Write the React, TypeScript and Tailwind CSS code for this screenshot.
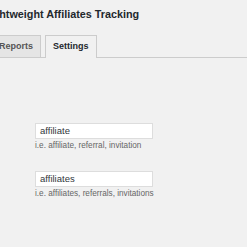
export default function App() {
  return (
    <div className="w-[247px] h-[247px] overflow-hidden bg-[#f1f1f1] font-['Liberation_Sans',Arial,sans-serif]">
      <div className="ml-[-17px] w-[281px]">
        <h1 className="pt-[7px] h-[36px] text-[10.8px] leading-[14px] font-bold text-[#23282d] whitespace-nowrap">
          Lightweight Affiliates Tracking
        </h1>

        <nav className="flex items-end gap-[4px] pl-[8px] h-[22px] border-b border-[#ccc]">
          <div className="h-[22px] px-[7px] flex items-center bg-[#e5e5e5] border border-b-0 border-[#ccc] text-[9px] font-bold text-[#555]">
            Reports
          </div>
          <div className="h-[23px] -mb-px px-[7px] flex items-center bg-[#f1f1f1] border border-b-0 border-[#ccc] text-[9px] font-bold text-[#23282d]">
            Settings
          </div>
        </nav>

        <div className="pl-[52px] pt-[65px] flex flex-col">
          <div className="flex flex-col">
            <div className="w-[118px] h-[16px] bg-white border border-[#ddd] flex items-center pl-[4px] text-[9.5px] text-[#32373c]">
              affiliate
            </div>
            <p className="mt-[2px] text-[8.2px] leading-[10px] text-[#666] whitespace-nowrap">
              i.e. affiliate, referral, invitation
            </p>
          </div>
          <div className="flex flex-col mt-[20px]">
            <div className="w-[118px] h-[16px] bg-white border border-[#ddd] flex items-center pl-[4px] text-[9.5px] text-[#32373c]">
              affiliates
            </div>
            <p className="mt-[2px] text-[8.2px] leading-[10px] text-[#666] whitespace-nowrap">
              i.e. affiliates, referrals, invitations
            </p>
          </div>
        </div>
      </div>
    </div>
  );
}
